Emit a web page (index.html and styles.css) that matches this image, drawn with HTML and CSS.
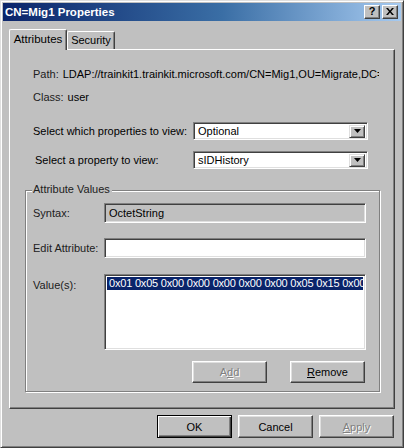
FILE: index.html
```html
<!DOCTYPE html>
<html>
<head>
<meta charset="utf-8">
<link rel="stylesheet" href="styles.css">
</head>
<body>
<div class="window">
  <div class="titlebar">
    <span class="title">CN=Mig1 Properties</span>
    <div class="tbtns">
      <span class="tbtn">?</span>
      <span class="tbtn x">
        <svg width="8" height="7" viewBox="0 0 8 7"><path d="M0 0h2l2 2.5L6 0h2L5 3.5 8 7H6L4 4.5 2 7H0l3-3.5z" fill="#000"/></svg>
      </span>
    </div>
  </div>
  <div class="dlg">
    <div class="tabs">
      <div class="tab active">Attributes</div>
      <div class="tab">Security</div>
    </div>
    <div class="panel">
      <div class="info">
        <span>Path:</span><span class="val path">LDAP://trainkit1.trainkit.microsoft.com/CN=Mig1,OU=Migrate,DC=trainkit,DC=microsoft,DC=com</span>
      </div>
      <div class="info second">
        <span>Class:</span><span class="val">user</span>
      </div>
      <div class="selrow first">
        <span class="sellabel">Select which properties to view:</span>
        <div class="combo"><span class="ctext">Optional</span><span class="arrow"><svg width="7" height="4" viewBox="0 0 7 4"><path d="M0 0h7L3.5 4z" fill="#000"/></svg></span></div>
      </div>
      <div class="selrow">
        <span class="sellabel ind">Select a property to view:</span>
        <div class="combo"><span class="ctext">sIDHistory</span><span class="arrow"><svg width="7" height="4" viewBox="0 0 7 4"><path d="M0 0h7L3.5 4z" fill="#000"/></svg></span></div>
      </div>
      <div class="group">
        <span class="legend">Attribute Values</span>
        <div class="grow">
          <span class="glabel">Syntax:</span>
          <div class="field ro">OctetString</div>
        </div>
        <div class="grow edit">
          <span class="glabel">Edit Attribute:</span>
          <div class="field"></div>
        </div>
        <div class="grow values">
          <span class="glabel top">Value(s):</span>
          <div class="field list"><div class="sel">0x01 0x05 0x00 0x00 0x00 0x00 0x00 0x05 0x15 0x00 0x00 0x00</div></div>
        </div>
        <div class="gbtns">
          <span class="btn small disabled">A<u>d</u>d</span>
          <span class="btn small"><u>R</u>emove</span>
        </div>
      </div>
    </div>
    <div class="buttons">
      <span class="btn default">OK</span>
      <span class="btn">Cancel</span>
      <span class="btn disabled"><u>A</u>pply</span>
    </div>
  </div>
</div>
</body>
</html>
```

FILE: styles.css
```css
* { box-sizing: border-box; }
html, body { margin: 0; padding: 0; background: #c0c0c0; }
body {
  font-family: "Liberation Sans", Arial, sans-serif;
  font-size: 11px;
  color: #000;
}
.window {
  width: 404px;
  height: 448px;
  background: #c0c0c0;
  border: 1px solid;
  border-color: #dfdfdf #404040 #404040 #dfdfdf;
  box-shadow: inset 1px 1px 0 #fff, inset -1px -1px 0 #808080;
  padding: 2px;
}
.titlebar {
  height: 18px;
  background: linear-gradient(to right, #0a246a 0%, #3a6ea5 55%, #a6caf0 100%);
  display: flex;
  align-items: center;
  justify-content: space-between;
  padding: 0 3px 0 2px;
}
.title {
  color: #fff;
  font-weight: bold;
  font-size: 11.5px;
}
.tbtns { display: flex; gap: 2px; }
.tbtn {
  width: 16px;
  height: 14px;
  background: #c0c0c0;
  border: 1px solid;
  border-color: #fff #404040 #404040 #fff;
  box-shadow: inset -1px -1px 0 #808080;
  display: flex;
  align-items: center;
  justify-content: center;
  font-weight: bold;
  font-size: 11px;
  line-height: 1;
  padding-bottom: 1px;
}
.dlg {
  padding: 8px 6px 0 6px;
}
.tabs {
  display: flex;
  align-items: flex-end;
  height: 20px;
  position: relative;
  z-index: 1;
}
.tab {
  height: 18px;
  border: 1px solid;
  border-bottom: none;
  border-color: #fff #404040 #404040 #fff;
  box-shadow: inset -1px 0 0 #808080;
  border-radius: 2px 2px 0 0;
  padding: 2px 0 0 0;
  background: #c0c0c0;
  width: 48px;
  text-align: center;
  white-space: nowrap;
}
.tab.active {
  height: 21px;
  width: 58px;
  margin-bottom: -1px;
  padding-top: 3px;
  font-size: 11.5px;
}
.panel {
  height: 360px;
  border: 1px solid;
  border-color: #fff #404040 #404040 #fff;
  box-shadow: inset -1px -1px 0 #808080;
  padding: 18px 13px 0 15px;
  display: flex;
  flex-direction: column;
}
.info {
  display: flex;
  gap: 4px;
  height: 13px;
  line-height: 13px;
  padding-left: 8px;
  white-space: nowrap;
  color: #202020;
}
.info.second { margin-top: 10px; }
.val { color: #000; }
.path {
  overflow: hidden;
  width: 316px;
  display: block;
}
.selrow {
  display: flex;
  align-items: center;
  justify-content: space-between;
  height: 18px;
  margin-top: 11px;
  padding-left: 8px;
  padding-right: 13px;
}
.selrow.first { margin-top: 18px; }
.sellabel.ind { margin-left: 2px; }
.combo {
  width: 175px;
  height: 18px;
  background: #fff;
  border: 1px solid;
  border-color: #808080 #fff #fff #808080;
  box-shadow: inset 1px 1px 0 #404040, inset -1px -1px 0 #dfdfdf;
  display: flex;
  align-items: center;
  justify-content: space-between;
  padding: 2px 2px 2px 4px;
}
.arrow {
  width: 16px;
  height: 13px;
  background: #c0c0c0;
  border: 1px solid;
  border-color: #dfdfdf #404040 #404040 #dfdfdf;
  box-shadow: inset 1px 1px 0 #fff, inset -1px -1px 0 #808080;
  display: flex;
  align-items: center;
  justify-content: center;
}
.group {
  position: relative;
  margin-top: 21px;
  border: 1px solid #808080;
  box-shadow: 1px 1px 0 #fff, inset 1px 1px 0 #fff;
  padding: 12px 13px 8px 7px;
  margin-right: 1px;
  display: flex;
  flex-direction: column;
}
.legend {
  position: absolute;
  top: -8px;
  left: 6px;
  padding: 0 2px 0 1px;
  background: #c0c0c0;
  line-height: 13px;
  color: #202020;
}
.grow {
  display: flex;
  align-items: center;
  justify-content: space-between;
}
.grow.edit { margin-top: 15px; }
.grow.values { margin-top: 16px; align-items: flex-start; }
.glabel { color: #202020; }
.glabel.top { padding-top: 5px; }
.field {
  width: 262px;
  height: 20px;
  background: #fff;
  border: 1px solid;
  border-color: #808080 #fff #fff #808080;
  box-shadow: inset 1px 1px 0 #404040, inset -1px -1px 0 #dfdfdf;
  padding: 3px 4px;
  line-height: 13px;
}
.field.ro { background: #c0c0c0; }
.field.list {
  height: 76px;
  padding: 2px;
  overflow: hidden;
}
.sel {
  background: #0a246a;
  color: #fff;
  height: 13px;
  line-height: 13px;
  padding-left: 2px;
  white-space: nowrap;
  overflow: hidden;
  letter-spacing: -0.2px;
}
.gbtns {
  display: flex;
  justify-content: flex-end;
  gap: 23px;
  margin-top: 11px;
  padding-right: 1px;
}
.btn {
  width: 75px;
  height: 23px;
  background: #c0c0c0;
  border: 1px solid;
  border-color: #fff #404040 #404040 #fff;
  box-shadow: inset -1px -1px 0 #808080, inset 1px 1px 0 #dfdfdf;
  display: flex;
  align-items: center;
  justify-content: center;
}
.btn.small { height: 22px; }
.btn.disabled {
  color: #808080;
  text-shadow: 1px 1px 0 #fff;
}
.btn.default {
  border: 1px solid #000;
  box-shadow: inset 1px 1px 0 #fff, inset -1px -1px 0 #404040, inset -2px -2px 0 #808080;
}
.buttons {
  display: flex;
  justify-content: flex-end;
  gap: 6px;
  margin-top: 6px;
  padding-right: 1px;
}
u { text-decoration: underline; text-underline-offset: 1px; }
```
